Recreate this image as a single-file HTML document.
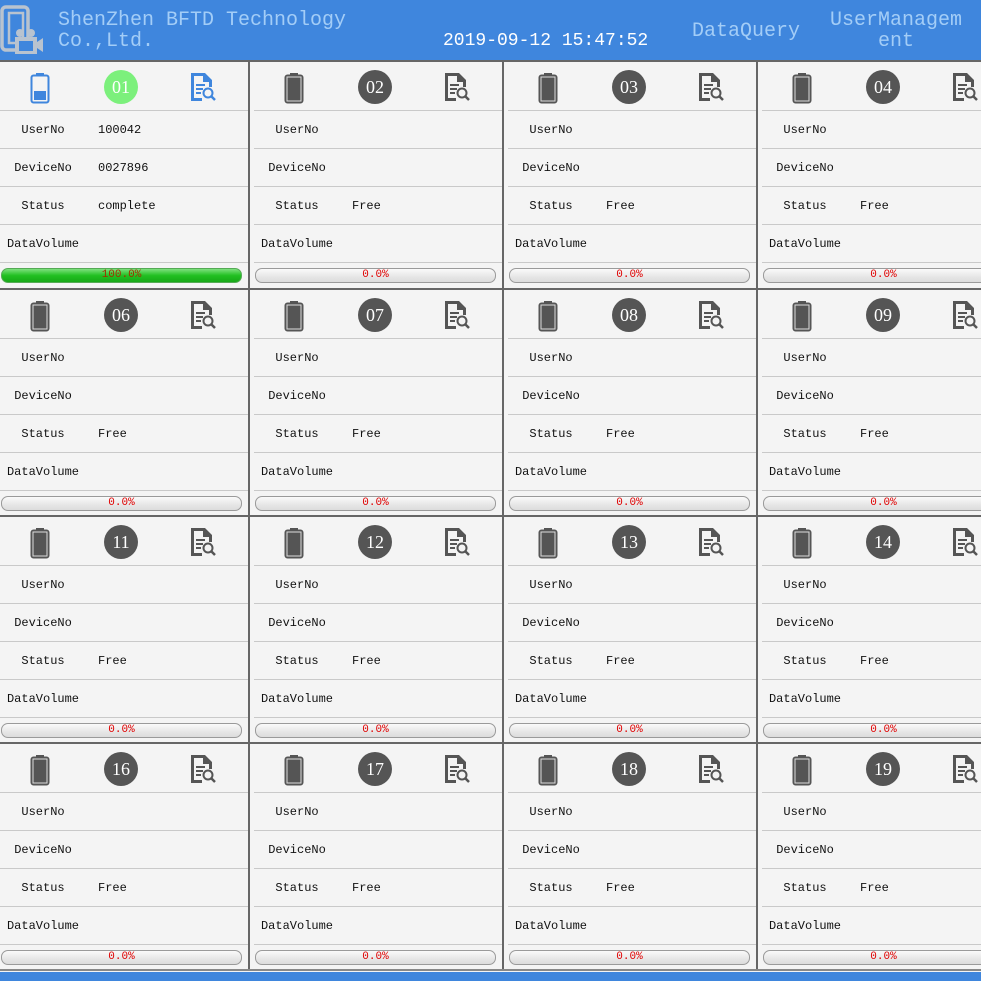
<!DOCTYPE html>
<html><head><meta charset="utf-8"><style>
*{margin:0;padding:0;box-sizing:border-box}
body{width:981px;height:981px;overflow:hidden;background:#f4f4f4;position:relative;font-family:"Liberation Mono",monospace}
.hdr{position:absolute;left:0;top:0;width:981px;height:60px;background:#3f86dd}
.t{position:absolute;color:#a3cdf7;font-size:20px;line-height:21px;white-space:pre}
.sep{position:absolute;background:#666}
.p{position:absolute;width:248px;height:225px;overflow:hidden}
.ln{position:absolute;left:-6px;width:254px;height:1px;background:#c9c9c9}
.lb{position:absolute;left:0;width:86px;text-align:center;font-size:12px;color:#111;line-height:14px}
.v{position:absolute;left:98px;font-size:12px;color:#111;line-height:14px}
.bar{position:absolute;left:1px;top:206px;width:241px;height:15px;border:1px solid #9a9a9a;border-radius:7px;background:linear-gradient(#fafafa,#e6e6e6 60%,#dcdcdc);text-align:center;font-size:11px;line-height:13px;color:#e00000}
.bar.g{background:linear-gradient(#7ee07e,#22c022 50%,#17a817);border-color:#5a5;color:#a03000}
.num{position:absolute;left:104px;top:8px;width:34px;height:34px;border-radius:50%;background:#555;color:#fff;font-family:"Liberation Serif",serif;font-size:18px;line-height:34px;text-align:center}
.num.g{background:#7cf07c}
.bat{position:absolute;left:30px;top:10px}
.doc{position:absolute;left:190px;top:11px}
</style></head><body>
<div class="hdr">
<svg style="position:absolute;left:0;top:4px" width="44" height="52" viewBox="0 0 44 52"><rect x="2" y="3" width="26" height="43" rx="4" fill="none" stroke="#b9c3cf" stroke-width="3.5"/><rect x="9" y="9" width="14" height="30" fill="none" stroke="#b9c3cf" stroke-width="2.5"/><circle cx="20" cy="29" r="4" fill="#b9c3cf"/><circle cx="31" cy="29" r="4" fill="#b9c3cf"/><rect x="15" y="33" width="22" height="17" fill="#b9c3cf"/><path d="M37 38 L43 34 L43 48 L37 44Z" fill="#b9c3cf"/><rect x="19" y="37" width="14" height="10" fill="#3f86dd"/></svg>
<div class="t" style="left:58px;top:10px">ShenZhen BFTD Technology
Co.,Ltd.</div>
<div class="t" style="left:443px;top:31px;color:#fff;font-size:18px">2019-09-12 15:47:52</div>
<div class="t" style="left:692px;top:21px">DataQuery</div>
<div class="t" style="left:830px;top:10px">UserManagem
    ent</div>
</div>
<div class="sep" style="left:0;top:60px;width:981px;height:2px"></div>
<div class="sep" style="left:0;top:288px;width:981px;height:2px"></div>
<div class="sep" style="left:0;top:515px;width:981px;height:2px"></div>
<div class="sep" style="left:0;top:742px;width:981px;height:2px"></div>
<div class="sep" style="left:0;top:969px;width:981px;height:2px;background:#888"></div>
<div style="position:absolute;left:0;top:972px;width:981px;height:9px;background:#3f86dd"></div>

<div class="p" style="left:0;top:62px">
<svg class="bat" width="20" height="32" viewBox="0 0 20 32"><rect x="6" y="1" width="8" height="3" fill="#3f86dd"/><rect x="1.5" y="3.5" width="17" height="27" rx="2" fill="none" stroke="#3f86dd" stroke-width="2"/><rect x="4" y="19" width="12" height="9" fill="#3f86dd"/></svg>
<div class="num g">01</div>
<svg class="doc" width="26" height="28" viewBox="0 0 26 28"><path d="M1 0H15L22 7V14H19V9H13V3H4V25H12V28H1Z" fill="#3f86dd"/><rect x="6" y="11" width="9" height="2" fill="#3f86dd"/><rect x="6" y="15" width="7" height="2" fill="#3f86dd"/><rect x="6" y="19" width="5" height="2" fill="#3f86dd"/><circle cx="18" cy="20" r="4.5" fill="none" stroke="#3f86dd" stroke-width="2"/><path d="M21 23L25 27" stroke="#3f86dd" stroke-width="2.5"/></svg>
<div class="ln" style="top:48px"></div><div class="ln" style="top:86px"></div><div class="ln" style="top:124px"></div><div class="ln" style="top:162px"></div><div class="ln" style="top:200px"></div>
<div class="lb" style="top:61px">UserNo</div><div class="v" style="top:61px">100042</div>
<div class="lb" style="top:99px">DeviceNo</div><div class="v" style="top:99px">0027896</div>
<div class="lb" style="top:137px">Status</div><div class="v" style="top:137px">complete</div>
<div class="lb" style="top:175px">DataVolume</div>
<div class="bar g">100.0%</div>
</div>
<div class="p" style="left:254px;top:62px"><svg class="bat" width="20" height="32" viewBox="0 0 20 32"><rect x="6" y="1" width="8" height="3" fill="#555"/><rect x="1.5" y="3.5" width="17" height="27" rx="2" fill="#555" stroke="#555" stroke-width="2"/><rect x="3" y="5" width="14" height="24" fill="#555" stroke="#ddd" stroke-width="1"/></svg><div class="num">02</div><svg class="doc" width="26" height="28" viewBox="0 0 26 28"><path d="M1 0H15L22 7V14H19V9H13V3H4V25H12V28H1Z" fill="#555"/><rect x="6" y="11" width="9" height="2" fill="#555"/><rect x="6" y="15" width="7" height="2" fill="#555"/><rect x="6" y="19" width="5" height="2" fill="#555"/><circle cx="18" cy="20" r="4.5" fill="none" stroke="#555" stroke-width="2"/><path d="M21 23L25 27" stroke="#555" stroke-width="2.5"/></svg><div class="ln" style="top:48px"></div><div class="ln" style="top:86px"></div><div class="ln" style="top:124px"></div><div class="ln" style="top:162px"></div><div class="ln" style="top:200px"></div><div class="lb" style="top:61px">UserNo</div><div class="lb" style="top:99px">DeviceNo</div><div class="lb" style="top:137px">Status</div><div class="v" style="top:137px">Free</div><div class="lb" style="top:175px">DataVolume</div><div class="bar">0.0%</div></div>
<div class="p" style="left:508px;top:62px"><svg class="bat" width="20" height="32" viewBox="0 0 20 32"><rect x="6" y="1" width="8" height="3" fill="#555"/><rect x="1.5" y="3.5" width="17" height="27" rx="2" fill="#555" stroke="#555" stroke-width="2"/><rect x="3" y="5" width="14" height="24" fill="#555" stroke="#ddd" stroke-width="1"/></svg><div class="num">03</div><svg class="doc" width="26" height="28" viewBox="0 0 26 28"><path d="M1 0H15L22 7V14H19V9H13V3H4V25H12V28H1Z" fill="#555"/><rect x="6" y="11" width="9" height="2" fill="#555"/><rect x="6" y="15" width="7" height="2" fill="#555"/><rect x="6" y="19" width="5" height="2" fill="#555"/><circle cx="18" cy="20" r="4.5" fill="none" stroke="#555" stroke-width="2"/><path d="M21 23L25 27" stroke="#555" stroke-width="2.5"/></svg><div class="ln" style="top:48px"></div><div class="ln" style="top:86px"></div><div class="ln" style="top:124px"></div><div class="ln" style="top:162px"></div><div class="ln" style="top:200px"></div><div class="lb" style="top:61px">UserNo</div><div class="lb" style="top:99px">DeviceNo</div><div class="lb" style="top:137px">Status</div><div class="v" style="top:137px">Free</div><div class="lb" style="top:175px">DataVolume</div><div class="bar">0.0%</div></div>
<div class="p" style="left:762px;top:62px"><svg class="bat" width="20" height="32" viewBox="0 0 20 32"><rect x="6" y="1" width="8" height="3" fill="#555"/><rect x="1.5" y="3.5" width="17" height="27" rx="2" fill="#555" stroke="#555" stroke-width="2"/><rect x="3" y="5" width="14" height="24" fill="#555" stroke="#ddd" stroke-width="1"/></svg><div class="num">04</div><svg class="doc" width="26" height="28" viewBox="0 0 26 28"><path d="M1 0H15L22 7V14H19V9H13V3H4V25H12V28H1Z" fill="#555"/><rect x="6" y="11" width="9" height="2" fill="#555"/><rect x="6" y="15" width="7" height="2" fill="#555"/><rect x="6" y="19" width="5" height="2" fill="#555"/><circle cx="18" cy="20" r="4.5" fill="none" stroke="#555" stroke-width="2"/><path d="M21 23L25 27" stroke="#555" stroke-width="2.5"/></svg><div class="ln" style="top:48px"></div><div class="ln" style="top:86px"></div><div class="ln" style="top:124px"></div><div class="ln" style="top:162px"></div><div class="ln" style="top:200px"></div><div class="lb" style="top:61px">UserNo</div><div class="lb" style="top:99px">DeviceNo</div><div class="lb" style="top:137px">Status</div><div class="v" style="top:137px">Free</div><div class="lb" style="top:175px">DataVolume</div><div class="bar">0.0%</div></div>

<div class="p" style="left:0;top:290px"><svg class="bat" width="20" height="32" viewBox="0 0 20 32"><rect x="6" y="1" width="8" height="3" fill="#555"/><rect x="1.5" y="3.5" width="17" height="27" rx="2" fill="#555" stroke="#555" stroke-width="2"/><rect x="3" y="5" width="14" height="24" fill="#555" stroke="#ddd" stroke-width="1"/></svg><div class="num">06</div><svg class="doc" width="26" height="28" viewBox="0 0 26 28"><path d="M1 0H15L22 7V14H19V9H13V3H4V25H12V28H1Z" fill="#555"/><rect x="6" y="11" width="9" height="2" fill="#555"/><rect x="6" y="15" width="7" height="2" fill="#555"/><rect x="6" y="19" width="5" height="2" fill="#555"/><circle cx="18" cy="20" r="4.5" fill="none" stroke="#555" stroke-width="2"/><path d="M21 23L25 27" stroke="#555" stroke-width="2.5"/></svg><div class="ln" style="top:48px"></div><div class="ln" style="top:86px"></div><div class="ln" style="top:124px"></div><div class="ln" style="top:162px"></div><div class="ln" style="top:200px"></div><div class="lb" style="top:61px">UserNo</div><div class="lb" style="top:99px">DeviceNo</div><div class="lb" style="top:137px">Status</div><div class="v" style="top:137px">Free</div><div class="lb" style="top:175px">DataVolume</div><div class="bar">0.0%</div></div>
<div class="p" style="left:254px;top:290px"><svg class="bat" width="20" height="32" viewBox="0 0 20 32"><rect x="6" y="1" width="8" height="3" fill="#555"/><rect x="1.5" y="3.5" width="17" height="27" rx="2" fill="#555" stroke="#555" stroke-width="2"/><rect x="3" y="5" width="14" height="24" fill="#555" stroke="#ddd" stroke-width="1"/></svg><div class="num">07</div><svg class="doc" width="26" height="28" viewBox="0 0 26 28"><path d="M1 0H15L22 7V14H19V9H13V3H4V25H12V28H1Z" fill="#555"/><rect x="6" y="11" width="9" height="2" fill="#555"/><rect x="6" y="15" width="7" height="2" fill="#555"/><rect x="6" y="19" width="5" height="2" fill="#555"/><circle cx="18" cy="20" r="4.5" fill="none" stroke="#555" stroke-width="2"/><path d="M21 23L25 27" stroke="#555" stroke-width="2.5"/></svg><div class="ln" style="top:48px"></div><div class="ln" style="top:86px"></div><div class="ln" style="top:124px"></div><div class="ln" style="top:162px"></div><div class="ln" style="top:200px"></div><div class="lb" style="top:61px">UserNo</div><div class="lb" style="top:99px">DeviceNo</div><div class="lb" style="top:137px">Status</div><div class="v" style="top:137px">Free</div><div class="lb" style="top:175px">DataVolume</div><div class="bar">0.0%</div></div>
<div class="p" style="left:508px;top:290px"><svg class="bat" width="20" height="32" viewBox="0 0 20 32"><rect x="6" y="1" width="8" height="3" fill="#555"/><rect x="1.5" y="3.5" width="17" height="27" rx="2" fill="#555" stroke="#555" stroke-width="2"/><rect x="3" y="5" width="14" height="24" fill="#555" stroke="#ddd" stroke-width="1"/></svg><div class="num">08</div><svg class="doc" width="26" height="28" viewBox="0 0 26 28"><path d="M1 0H15L22 7V14H19V9H13V3H4V25H12V28H1Z" fill="#555"/><rect x="6" y="11" width="9" height="2" fill="#555"/><rect x="6" y="15" width="7" height="2" fill="#555"/><rect x="6" y="19" width="5" height="2" fill="#555"/><circle cx="18" cy="20" r="4.5" fill="none" stroke="#555" stroke-width="2"/><path d="M21 23L25 27" stroke="#555" stroke-width="2.5"/></svg><div class="ln" style="top:48px"></div><div class="ln" style="top:86px"></div><div class="ln" style="top:124px"></div><div class="ln" style="top:162px"></div><div class="ln" style="top:200px"></div><div class="lb" style="top:61px">UserNo</div><div class="lb" style="top:99px">DeviceNo</div><div class="lb" style="top:137px">Status</div><div class="v" style="top:137px">Free</div><div class="lb" style="top:175px">DataVolume</div><div class="bar">0.0%</div></div>
<div class="p" style="left:762px;top:290px"><svg class="bat" width="20" height="32" viewBox="0 0 20 32"><rect x="6" y="1" width="8" height="3" fill="#555"/><rect x="1.5" y="3.5" width="17" height="27" rx="2" fill="#555" stroke="#555" stroke-width="2"/><rect x="3" y="5" width="14" height="24" fill="#555" stroke="#ddd" stroke-width="1"/></svg><div class="num">09</div><svg class="doc" width="26" height="28" viewBox="0 0 26 28"><path d="M1 0H15L22 7V14H19V9H13V3H4V25H12V28H1Z" fill="#555"/><rect x="6" y="11" width="9" height="2" fill="#555"/><rect x="6" y="15" width="7" height="2" fill="#555"/><rect x="6" y="19" width="5" height="2" fill="#555"/><circle cx="18" cy="20" r="4.5" fill="none" stroke="#555" stroke-width="2"/><path d="M21 23L25 27" stroke="#555" stroke-width="2.5"/></svg><div class="ln" style="top:48px"></div><div class="ln" style="top:86px"></div><div class="ln" style="top:124px"></div><div class="ln" style="top:162px"></div><div class="ln" style="top:200px"></div><div class="lb" style="top:61px">UserNo</div><div class="lb" style="top:99px">DeviceNo</div><div class="lb" style="top:137px">Status</div><div class="v" style="top:137px">Free</div><div class="lb" style="top:175px">DataVolume</div><div class="bar">0.0%</div></div>

<div class="p" style="left:0;top:517px"><svg class="bat" width="20" height="32" viewBox="0 0 20 32"><rect x="6" y="1" width="8" height="3" fill="#555"/><rect x="1.5" y="3.5" width="17" height="27" rx="2" fill="#555" stroke="#555" stroke-width="2"/><rect x="3" y="5" width="14" height="24" fill="#555" stroke="#ddd" stroke-width="1"/></svg><div class="num">11</div><svg class="doc" width="26" height="28" viewBox="0 0 26 28"><path d="M1 0H15L22 7V14H19V9H13V3H4V25H12V28H1Z" fill="#555"/><rect x="6" y="11" width="9" height="2" fill="#555"/><rect x="6" y="15" width="7" height="2" fill="#555"/><rect x="6" y="19" width="5" height="2" fill="#555"/><circle cx="18" cy="20" r="4.5" fill="none" stroke="#555" stroke-width="2"/><path d="M21 23L25 27" stroke="#555" stroke-width="2.5"/></svg><div class="ln" style="top:48px"></div><div class="ln" style="top:86px"></div><div class="ln" style="top:124px"></div><div class="ln" style="top:162px"></div><div class="ln" style="top:200px"></div><div class="lb" style="top:61px">UserNo</div><div class="lb" style="top:99px">DeviceNo</div><div class="lb" style="top:137px">Status</div><div class="v" style="top:137px">Free</div><div class="lb" style="top:175px">DataVolume</div><div class="bar">0.0%</div></div>
<div class="p" style="left:254px;top:517px"><svg class="bat" width="20" height="32" viewBox="0 0 20 32"><rect x="6" y="1" width="8" height="3" fill="#555"/><rect x="1.5" y="3.5" width="17" height="27" rx="2" fill="#555" stroke="#555" stroke-width="2"/><rect x="3" y="5" width="14" height="24" fill="#555" stroke="#ddd" stroke-width="1"/></svg><div class="num">12</div><svg class="doc" width="26" height="28" viewBox="0 0 26 28"><path d="M1 0H15L22 7V14H19V9H13V3H4V25H12V28H1Z" fill="#555"/><rect x="6" y="11" width="9" height="2" fill="#555"/><rect x="6" y="15" width="7" height="2" fill="#555"/><rect x="6" y="19" width="5" height="2" fill="#555"/><circle cx="18" cy="20" r="4.5" fill="none" stroke="#555" stroke-width="2"/><path d="M21 23L25 27" stroke="#555" stroke-width="2.5"/></svg><div class="ln" style="top:48px"></div><div class="ln" style="top:86px"></div><div class="ln" style="top:124px"></div><div class="ln" style="top:162px"></div><div class="ln" style="top:200px"></div><div class="lb" style="top:61px">UserNo</div><div class="lb" style="top:99px">DeviceNo</div><div class="lb" style="top:137px">Status</div><div class="v" style="top:137px">Free</div><div class="lb" style="top:175px">DataVolume</div><div class="bar">0.0%</div></div>
<div class="p" style="left:508px;top:517px"><svg class="bat" width="20" height="32" viewBox="0 0 20 32"><rect x="6" y="1" width="8" height="3" fill="#555"/><rect x="1.5" y="3.5" width="17" height="27" rx="2" fill="#555" stroke="#555" stroke-width="2"/><rect x="3" y="5" width="14" height="24" fill="#555" stroke="#ddd" stroke-width="1"/></svg><div class="num">13</div><svg class="doc" width="26" height="28" viewBox="0 0 26 28"><path d="M1 0H15L22 7V14H19V9H13V3H4V25H12V28H1Z" fill="#555"/><rect x="6" y="11" width="9" height="2" fill="#555"/><rect x="6" y="15" width="7" height="2" fill="#555"/><rect x="6" y="19" width="5" height="2" fill="#555"/><circle cx="18" cy="20" r="4.5" fill="none" stroke="#555" stroke-width="2"/><path d="M21 23L25 27" stroke="#555" stroke-width="2.5"/></svg><div class="ln" style="top:48px"></div><div class="ln" style="top:86px"></div><div class="ln" style="top:124px"></div><div class="ln" style="top:162px"></div><div class="ln" style="top:200px"></div><div class="lb" style="top:61px">UserNo</div><div class="lb" style="top:99px">DeviceNo</div><div class="lb" style="top:137px">Status</div><div class="v" style="top:137px">Free</div><div class="lb" style="top:175px">DataVolume</div><div class="bar">0.0%</div></div>
<div class="p" style="left:762px;top:517px"><svg class="bat" width="20" height="32" viewBox="0 0 20 32"><rect x="6" y="1" width="8" height="3" fill="#555"/><rect x="1.5" y="3.5" width="17" height="27" rx="2" fill="#555" stroke="#555" stroke-width="2"/><rect x="3" y="5" width="14" height="24" fill="#555" stroke="#ddd" stroke-width="1"/></svg><div class="num">14</div><svg class="doc" width="26" height="28" viewBox="0 0 26 28"><path d="M1 0H15L22 7V14H19V9H13V3H4V25H12V28H1Z" fill="#555"/><rect x="6" y="11" width="9" height="2" fill="#555"/><rect x="6" y="15" width="7" height="2" fill="#555"/><rect x="6" y="19" width="5" height="2" fill="#555"/><circle cx="18" cy="20" r="4.5" fill="none" stroke="#555" stroke-width="2"/><path d="M21 23L25 27" stroke="#555" stroke-width="2.5"/></svg><div class="ln" style="top:48px"></div><div class="ln" style="top:86px"></div><div class="ln" style="top:124px"></div><div class="ln" style="top:162px"></div><div class="ln" style="top:200px"></div><div class="lb" style="top:61px">UserNo</div><div class="lb" style="top:99px">DeviceNo</div><div class="lb" style="top:137px">Status</div><div class="v" style="top:137px">Free</div><div class="lb" style="top:175px">DataVolume</div><div class="bar">0.0%</div></div>

<div class="p" style="left:0;top:744px"><svg class="bat" width="20" height="32" viewBox="0 0 20 32"><rect x="6" y="1" width="8" height="3" fill="#555"/><rect x="1.5" y="3.5" width="17" height="27" rx="2" fill="#555" stroke="#555" stroke-width="2"/><rect x="3" y="5" width="14" height="24" fill="#555" stroke="#ddd" stroke-width="1"/></svg><div class="num">16</div><svg class="doc" width="26" height="28" viewBox="0 0 26 28"><path d="M1 0H15L22 7V14H19V9H13V3H4V25H12V28H1Z" fill="#555"/><rect x="6" y="11" width="9" height="2" fill="#555"/><rect x="6" y="15" width="7" height="2" fill="#555"/><rect x="6" y="19" width="5" height="2" fill="#555"/><circle cx="18" cy="20" r="4.5" fill="none" stroke="#555" stroke-width="2"/><path d="M21 23L25 27" stroke="#555" stroke-width="2.5"/></svg><div class="ln" style="top:48px"></div><div class="ln" style="top:86px"></div><div class="ln" style="top:124px"></div><div class="ln" style="top:162px"></div><div class="ln" style="top:200px"></div><div class="lb" style="top:61px">UserNo</div><div class="lb" style="top:99px">DeviceNo</div><div class="lb" style="top:137px">Status</div><div class="v" style="top:137px">Free</div><div class="lb" style="top:175px">DataVolume</div><div class="bar">0.0%</div></div>
<div class="p" style="left:254px;top:744px"><svg class="bat" width="20" height="32" viewBox="0 0 20 32"><rect x="6" y="1" width="8" height="3" fill="#555"/><rect x="1.5" y="3.5" width="17" height="27" rx="2" fill="#555" stroke="#555" stroke-width="2"/><rect x="3" y="5" width="14" height="24" fill="#555" stroke="#ddd" stroke-width="1"/></svg><div class="num">17</div><svg class="doc" width="26" height="28" viewBox="0 0 26 28"><path d="M1 0H15L22 7V14H19V9H13V3H4V25H12V28H1Z" fill="#555"/><rect x="6" y="11" width="9" height="2" fill="#555"/><rect x="6" y="15" width="7" height="2" fill="#555"/><rect x="6" y="19" width="5" height="2" fill="#555"/><circle cx="18" cy="20" r="4.5" fill="none" stroke="#555" stroke-width="2"/><path d="M21 23L25 27" stroke="#555" stroke-width="2.5"/></svg><div class="ln" style="top:48px"></div><div class="ln" style="top:86px"></div><div class="ln" style="top:124px"></div><div class="ln" style="top:162px"></div><div class="ln" style="top:200px"></div><div class="lb" style="top:61px">UserNo</div><div class="lb" style="top:99px">DeviceNo</div><div class="lb" style="top:137px">Status</div><div class="v" style="top:137px">Free</div><div class="lb" style="top:175px">DataVolume</div><div class="bar">0.0%</div></div>
<div class="p" style="left:508px;top:744px"><svg class="bat" width="20" height="32" viewBox="0 0 20 32"><rect x="6" y="1" width="8" height="3" fill="#555"/><rect x="1.5" y="3.5" width="17" height="27" rx="2" fill="#555" stroke="#555" stroke-width="2"/><rect x="3" y="5" width="14" height="24" fill="#555" stroke="#ddd" stroke-width="1"/></svg><div class="num">18</div><svg class="doc" width="26" height="28" viewBox="0 0 26 28"><path d="M1 0H15L22 7V14H19V9H13V3H4V25H12V28H1Z" fill="#555"/><rect x="6" y="11" width="9" height="2" fill="#555"/><rect x="6" y="15" width="7" height="2" fill="#555"/><rect x="6" y="19" width="5" height="2" fill="#555"/><circle cx="18" cy="20" r="4.5" fill="none" stroke="#555" stroke-width="2"/><path d="M21 23L25 27" stroke="#555" stroke-width="2.5"/></svg><div class="ln" style="top:48px"></div><div class="ln" style="top:86px"></div><div class="ln" style="top:124px"></div><div class="ln" style="top:162px"></div><div class="ln" style="top:200px"></div><div class="lb" style="top:61px">UserNo</div><div class="lb" style="top:99px">DeviceNo</div><div class="lb" style="top:137px">Status</div><div class="v" style="top:137px">Free</div><div class="lb" style="top:175px">DataVolume</div><div class="bar">0.0%</div></div>
<div class="p" style="left:762px;top:744px"><svg class="bat" width="20" height="32" viewBox="0 0 20 32"><rect x="6" y="1" width="8" height="3" fill="#555"/><rect x="1.5" y="3.5" width="17" height="27" rx="2" fill="#555" stroke="#555" stroke-width="2"/><rect x="3" y="5" width="14" height="24" fill="#555" stroke="#ddd" stroke-width="1"/></svg><div class="num">19</div><svg class="doc" width="26" height="28" viewBox="0 0 26 28"><path d="M1 0H15L22 7V14H19V9H13V3H4V25H12V28H1Z" fill="#555"/><rect x="6" y="11" width="9" height="2" fill="#555"/><rect x="6" y="15" width="7" height="2" fill="#555"/><rect x="6" y="19" width="5" height="2" fill="#555"/><circle cx="18" cy="20" r="4.5" fill="none" stroke="#555" stroke-width="2"/><path d="M21 23L25 27" stroke="#555" stroke-width="2.5"/></svg><div class="ln" style="top:48px"></div><div class="ln" style="top:86px"></div><div class="ln" style="top:124px"></div><div class="ln" style="top:162px"></div><div class="ln" style="top:200px"></div><div class="lb" style="top:61px">UserNo</div><div class="lb" style="top:99px">DeviceNo</div><div class="lb" style="top:137px">Status</div><div class="v" style="top:137px">Free</div><div class="lb" style="top:175px">DataVolume</div><div class="bar">0.0%</div></div>

<div class="sep" style="left:248px;top:62px;width:2px;height:907px"></div>
<div class="sep" style="left:502px;top:62px;width:2px;height:907px"></div>
<div class="sep" style="left:756px;top:62px;width:2px;height:907px"></div>
</body></html>
